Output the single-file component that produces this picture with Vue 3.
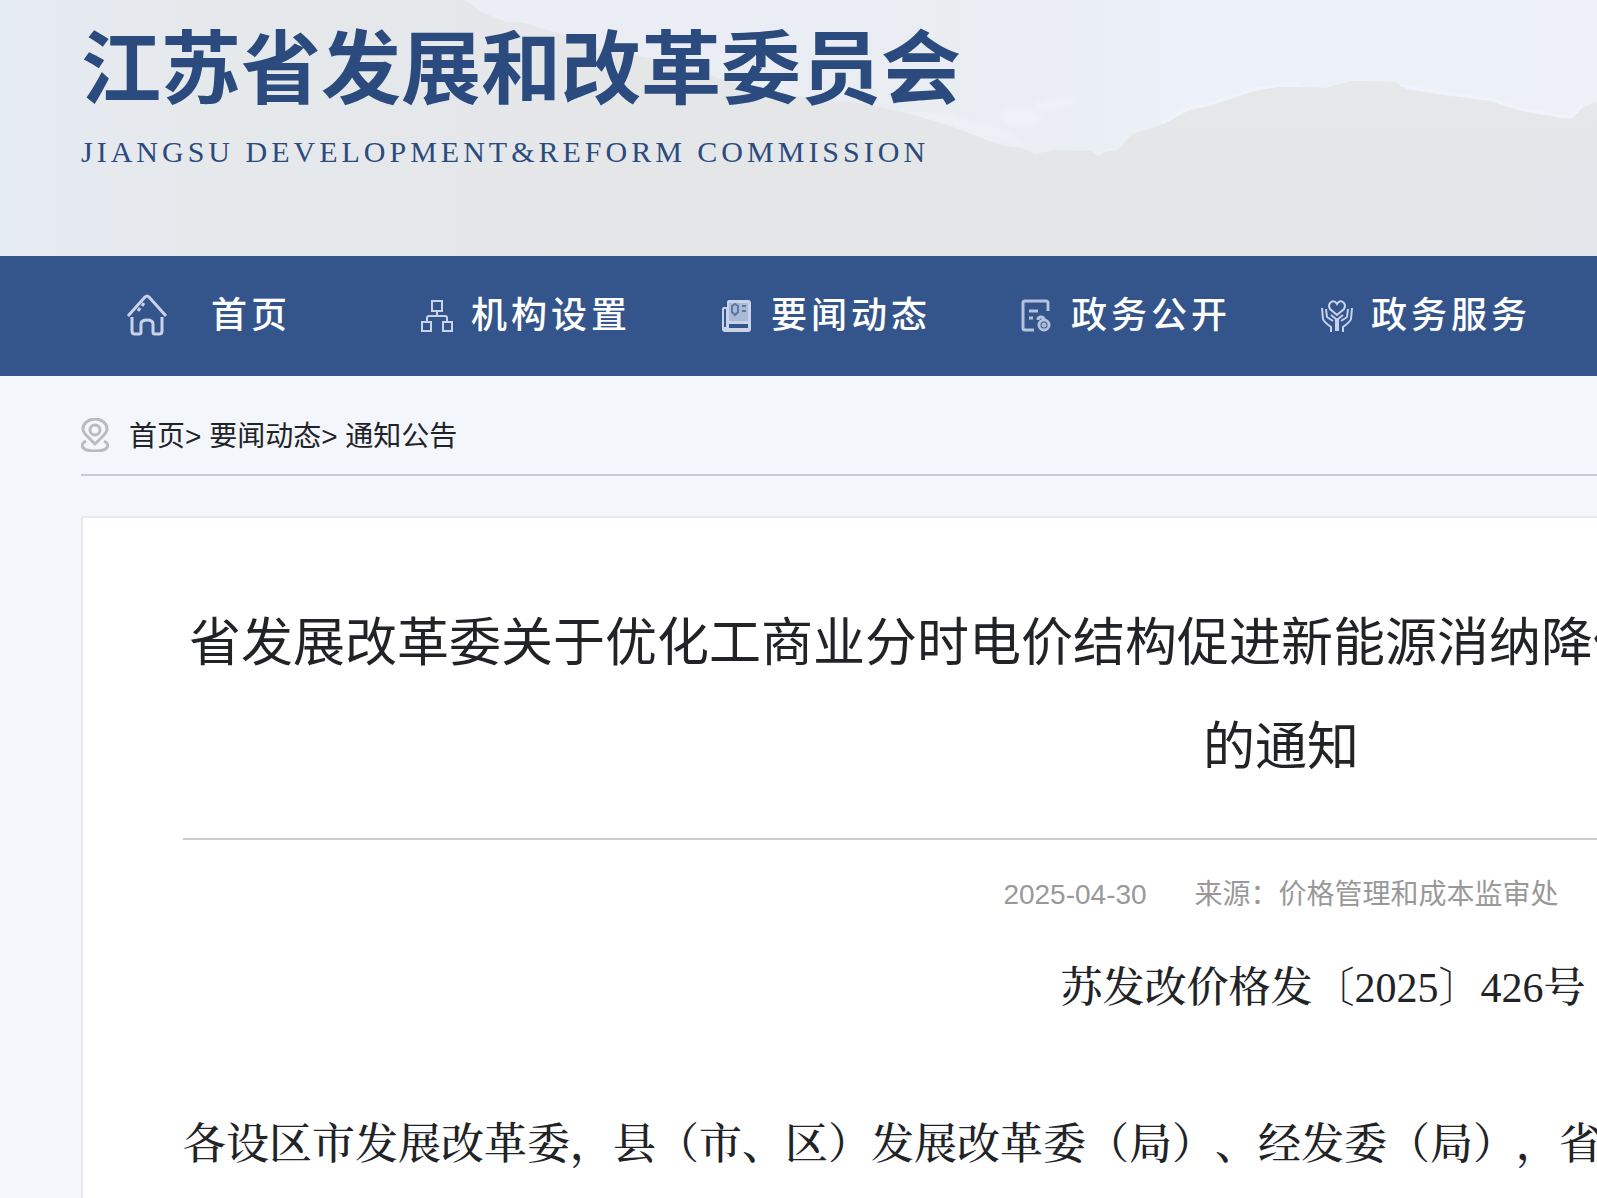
<script setup>
const navItems = [
  { label: '首页', icon: 'home' },
  { label: '机构设置', icon: 'org' },
  { label: '要闻动态', icon: 'news' },
  { label: '政务公开', icon: 'doc' },
  { label: '政务服务', icon: 'service' },
]
</script>

<template>
  <div class="page">
    <header class="banner">
      <svg class="scenery" viewBox="0 0 1597 256" preserveAspectRatio="none" aria-hidden="true">
        <defs>
          <linearGradient id="sky" x1="0" x2="1" y1="0" y2="0">
            <stop offset="0" stop-color="#e6ecf4" />
            <stop offset="0.3" stop-color="#ebeef5" />
            <stop offset="0.6" stop-color="#e9edf2" />
            <stop offset="0.75" stop-color="#ecf0f8" />
            <stop offset="1" stop-color="#edf1f7" />
          </linearGradient>
          <linearGradient id="hill" gradientUnits="userSpaceOnUse" x1="0" x2="1597" y1="0" y2="0">
            <stop offset="0" stop-color="#e5ebf3" />
            <stop offset="0.12" stop-color="#e6e9ec" />
            <stop offset="0.4" stop-color="#e4e6e8" />
            <stop offset="0.75" stop-color="#e4e6e7" />
            <stop offset="1" stop-color="#e3e6ea" />
          </linearGradient>
          <linearGradient id="peak" x1="0" x2="0" y1="0" y2="1">
            <stop offset="0" stop-color="#e7e8e8" />
            <stop offset="1" stop-color="#e4e6ea" stop-opacity="0" />
          </linearGradient>
          <filter id="soften" x="-5%" y="-20%" width="110%" height="140%">
            <feGaussianBlur stdDeviation="2" />
          </filter>
        </defs>
        <rect width="1597" height="256" fill="url(#sky)" />
        <g fill="#f1f1f8" filter="url(#soften)">
          <path d="M1002 112Q1015 104 1034 110L1042 122Q1020 128 1004 124ZM1034 104L1052 100L1080 97L1068 106L1040 110Z" />
          <path d="M900 110L940 112L1000 128L1030 145L990 142L940 124Z" opacity="0.6" />
        </g>
        <path
          fill="url(#hill)"
          d="M0 0H465L482 12L506 22L524 23L555 32L602 50L650 58L700 72L760 91L810 98L860 103L910 114L950 126L1000 145L1022 148L1035 154L1055 150L1090 151L1098 156L1105 152L1118 150L1132 134L1162 125L1190 110L1210 106L1255 91L1280 87L1326 88L1352 81L1394 82L1408 90L1450 96L1490 101L1520 111L1560 118L1572 119L1582 108L1597 102V256H0Z"
        />
        <path fill="url(#peak)" d="M1132 134L1162 125L1190 110L1210 106L1255 91L1280 87L1326 88L1352 81L1394 82L1408 90L1450 96L1490 101L1520 111L1560 118L1572 119L1582 108L1597 102V200H1132Z" />
        <path fill="none" stroke="#f0f3fb" stroke-width="3" d="M1162 123L1190 108L1210 104L1255 89L1280 85L1300 84M1400 85L1450 94L1490 99L1520 109L1560 116L1571 117L1582 106" />
      </svg>
      <div class="brand">
        <h1 class="brand-name">江苏省发展和改革委员会</h1>
        <p class="brand-en">JIANGSU DEVELOPMENT&amp;REFORM COMMISSION</p>
      </div>
    </header>

    <nav class="nav" aria-label="主导航">
      <a v-for="item in navItems" :key="item.icon" href="#" class="nav-item" :class="item.icon">
        <svg v-if="item.icon === 'home'" class="nav-icon" viewBox="0 0 40 42" aria-hidden="true">
          <path d="M1 22L18 3Q20 1 22 3L39 22M5 23V37Q5 40 8 40H12Q14 40 14 38V30Q14 26 20 26Q26 26 26 30V38Q26 40 28 40H32Q35 40 35 37V23" />
          <path d="M11 17L13 14M15 12L17 9" />
        </svg>
        <svg v-else-if="item.icon === 'org'" class="nav-icon" viewBox="0 0 32 32" aria-hidden="true">
          <path d="M11 1H21V11H11ZM1 22H10V31H1ZM22 22H31V31H22ZM16 11V16M6 22V18Q6 16 8 16H24Q26 16 26 18V22" />
        </svg>
        <svg v-else-if="item.icon === 'news'" class="nav-icon" viewBox="0 0 32 32" aria-hidden="true">
          <path class="fill" fill-rule="evenodd" d="M8 0H27Q30 0 30 3V29Q30 32 27 32H4Q1 32 1 29V10Q1 7 3 7H6V3Q6 0 8 0ZM3 9V27H5V9ZM8 24V28H27V24ZM8 3V21H27V3Z" />
          <path class="fill soft" d="M8 3H27V24H8Z" />
          <path class="dark" d="M11 6L14 4L17 6V12L14 15L11 12ZM21 6H25M21 11H25" />
        </svg>
        <svg v-else-if="item.icon === 'doc'" class="nav-icon" viewBox="0 0 32 32" aria-hidden="true">
          <path d="M27 11V3Q27 1 25 1H4Q2 1 2 3V28Q2 30 4 30H13M8 11H17M8 18H12" />
          <path d="M17 20Q17 17 20 17Q23 17 23 20" />
          <circle cx="23" cy="25" r="5" />
          <circle cx="23" cy="25" r="1" />
        </svg>
        <svg v-else class="nav-icon" viewBox="0 0 32 32" aria-hidden="true">
          <path d="M16 15L9 9Q7 6 9 3Q13 -1 16 4Q19 -1 23 3Q25 6 23 9Z" />
          <path d="M1 8L2 19Q3 22 10 27V32M5 9L6 17L12 21M10 15L15 19V31M31 8L30 19Q29 22 22 27V32M27 9L26 17L20 21M22 15L17 19V31" />
        </svg>
        <span>{{ item.label }}</span>
      </a>
    </nav>

    <main class="container">
      <nav class="crumbs" aria-label="当前位置">
        <svg class="pin" viewBox="0 0 28 34" aria-hidden="true">
          <path d="M14 26L6 18Q2 14 2 11A12 10 0 0 1 26 11Q26 14 22 18Z" />
          <circle cx="14" cy="12" r="5" />
          <path d="M5 23Q1 25 1 28Q3 33 14 33Q25 33 27 28Q27 25 23 23" />
        </svg>
        <span class="trail"><a href="#">首页</a>&gt; <a href="#">要闻动态</a>&gt; <a href="#">通知公告</a></span>
      </nav>

      <article class="article">
        <h2 class="title">省发展改革委关于优化工商业分时电价结构促进新能源消纳降低企业用电成本支持经济社会发展的通知</h2>
        <div class="meta">
          <time datetime="2025-04-30">2025-04-30</time>
          <span>来源：价格管理和成本监审处</span>
        </div>
        <p class="doc-number">苏发改价格发〔2025〕426号</p>
        <p class="body-text">各设区市发展改革委，县（市、区）发展改革委（局）、经发委（局），省电力公司：</p>
      </article>
    </main>
  </div>
</template>

<style>
body {
  margin: 0;
  background: #f3f6fb;
}
</style>

<style scoped>
.page {
  min-height: 100vh;
  overflow: hidden;
  background: #f3f6fb;
  color: #222327;
  font-family: "Liberation Sans", "Noto Sans CJK SC", sans-serif;
  text-spacing-trim: space-all;
}
h1,
h2,
p {
  margin: 0;
}
a {
  color: inherit;
  text-decoration: none;
}

.banner {
  position: relative;
  height: 256px;
}
.scenery {
  position: absolute;
  inset: 0;
  width: 100%;
  height: 100%;
}
.brand {
  position: relative;
  padding: 22px 0 0 81px;
  color: #2b4b7e;
  white-space: nowrap;
}
.brand-name {
  font-size: 80px;
  line-height: 96px;
  font-weight: 700;
}
.brand-en {
  margin-top: 14px;
  font-family: "Liberation Serif", serif;
  font-size: 30px;
  line-height: 40px;
  letter-spacing: 4px;
}

.nav {
  display: flex;
  height: 120px;
  padding-left: 76px;
  background: #34558b;
  color: #fff;
}
.nav-item {
  flex: none;
  display: flex;
  align-items: center;
  justify-content: center;
  gap: 18px;
  width: 300px;
  font-size: 36px;
  line-height: 48px;
  font-weight: 500;
  letter-spacing: 4px;
  white-space: nowrap;
}
.nav-item.home {
  gap: 44px;
  padding-right: 34px;
  width: 266px;
}
.nav-icon {
  width: 32px;
  height: 32px;
  overflow: visible;
  fill: none;
  stroke: #c8d3e9;
  stroke-width: 2;
}
.home .nav-icon {
  width: 40px;
  height: 42px;
  padding-bottom: 2px;
  stroke-width: 3;
}
.doc .nav-icon {
  stroke: #b4c2dd;
  stroke-width: 3;
}
.nav-icon .fill {
  fill: #c8d3e9;
  stroke: none;
}
.nav-icon .soft {
  opacity: 0.8;
}
.nav-icon .dark {
  stroke: #5c77a5;
}

.container {
  width: 2400px;
  margin-left: 81px;
}
.crumbs {
  display: flex;
  align-items: center;
  gap: 20px;
  height: 100px;
  padding-top: 20px;
  box-sizing: border-box;
  border-bottom: 2px solid #c8cbd1;
  font-size: 28px;
  line-height: 40px;
}
.trail {
  padding-top: 4px;
}
.pin {
  width: 28px;
  height: 34px;
  fill: none;
  stroke: #b9bbbf;
  stroke-width: 3;
}

.article {
  margin-top: 40px;
  padding: 73px 100px 60px;
  box-sizing: border-box;
  border: 2px solid #e8e9ec;
  background: #fff;
}
.title {
  padding-bottom: 39px;
  border-bottom: 2px solid #ccc;
  font-size: 52px;
  line-height: 104px;
  font-weight: 400;
  text-align: center;
}
.meta {
  display: flex;
  justify-content: center;
  gap: 48px;
  margin-top: 27px;
  color: #999;
  font-size: 28px;
  line-height: 56px;
}
.doc-number,
.body-text {
  font-family: "Liberation Serif", "Noto Serif CJK SC", "Noto Sans CJK SC", serif;
  font-weight: 500;
  line-height: 84px;
}
.doc-number {
  margin-top: 23px;
  font-size: 42px;
  text-align: center;
  text-indent: 2em;
}
.body-text {
  margin-top: 73px;
  font-size: 43px;
}
</style>
